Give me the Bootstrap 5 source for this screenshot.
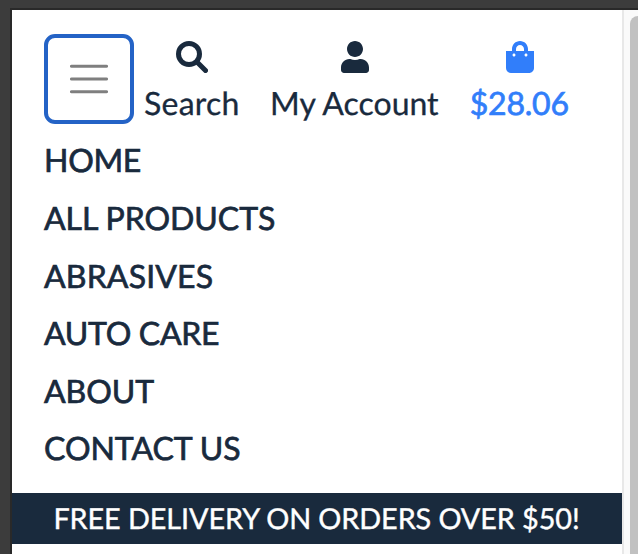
<!DOCTYPE html>
<html lang="en">
<head>
<meta charset="utf-8">
<meta name="viewport" content="width=device-width, initial-scale=1">
<title>Store menu</title>
<link href="https://cdn.jsdelivr.net/npm/bootstrap@5.3.0/dist/css/bootstrap.min.css" rel="stylesheet">
<style>
html, body { height: 100%; overflow: hidden; }
body { font-family: Lato, sans-serif; font-size: 32px; line-height: 48px; color: #192a3d; background: #3c3c3c; padding: 8px 0 0 10px; text-rendering: geometricPrecision; }
.device { border-left: 2px solid #292929; border-top: 2px solid #292929; height: 546px; }
.site-bar { padding: 24px 32px 0; height: 120px; }
.site-bar .navbar-toggler { width: 90px; height: 90px; border: 4px solid #2463c6; border-radius: 11px; }
.tool { color: #192a3d; padding-top: 7px; -webkit-text-stroke: .3px; }
.tool svg { height: 32px; display: block; margin-bottom: 6px; flex-shrink: 0; }
.tool-search { margin-left: 10px; letter-spacing: .25px; }
.tool-account { margin-left: 30.4px; }
.tool-account svg { margin-left: 1px; }
.tool-cart { margin-left: 31.1px; color: #317efa; -webkit-text-stroke: .7px; letter-spacing: -.2px; }
.tool-cart svg { margin-left: 1px; }
.menu { padding: 0 32px; height: 363px; }
.menu .nav-link { color: #192a3d; height: 57.6px; padding: 6.4px 0 0; line-height: 48px; -webkit-text-stroke: .7px; letter-spacing: -.05px; }
.menu .item-home { letter-spacing: -.3px; }
.menu .item-abrasives { letter-spacing: .15px; }
.menu .item-auto { letter-spacing: -.3px; }
.promo { background: #192a3d; height: 51px; font-size: 28.8px; line-height: 52px; letter-spacing: -.08px; -webkit-text-stroke: .4px; padding-right: 1px; }
.track { width: 16px; background: #fafafa; border-left: 2px solid #e8e8e8; padding: 6px 0 0 6px; }
.thumb { background: #c1c1c1; border-top-left-radius: 8px; }
</style>
</head>
<body>
<div class="device d-flex">
  <main class="flex-grow-1 bg-white overflow-hidden">
    <header class="site-bar d-flex align-items-start">
      <button class="navbar-toggler bg-white p-0 d-flex align-items-center justify-content-center flex-shrink-0" type="button" aria-label="Menu">
        <svg width="38" height="30" viewBox="0 0 38 30" stroke="#7f7f7f" stroke-width="3.1" stroke-linecap="round"><path d="M1.500 2.200h35M1.500 15h35M1.500 27.800h35"/></svg>
      </button>
      <a class="tool tool-search d-flex flex-column align-items-center text-decoration-none text-nowrap" href="#">
        <svg width="32" viewBox="0 0 512 512" fill="none" stroke="currentColor" stroke-width="80" stroke-linecap="round"><circle cx="208" cy="208" r="168"/><path d="M340 340L472 472"/></svg>
        <span>Search</span>
      </a>
      <a class="tool tool-account d-flex flex-column align-items-center text-decoration-none text-nowrap" href="#">
        <svg width="28" viewBox="0 0 448 512" fill="currentColor"><path d="M224 256c70.700 0 128-57.300 128-128S294.700 0 224 0 96 57.300 96 128s57.300 128 128 128zm89.600 32h-16.700c-22.200 10.200-46.900 16-72.900 16s-50.600-5.800-72.900-16h-16.700C60.200 288 0 348.200 0 422.400V464c0 26.500 21.500 48 48 48h352c26.500 0 48-21.500 48-48v-41.600c0-74.200-60.200-134.400-134.400-134.400z"/></svg>
        <span>My Account</span>
      </a>
      <a class="tool tool-cart d-flex flex-column align-items-center text-decoration-none text-nowrap" href="#">
        <svg width="28" viewBox="0 0 448 512" fill="currentColor"><path d="M352 160v-32C352 57.420 294.579 0 224 0 153.420 0 96 57.420 96 128v32H0v272c0 44.183 35.817 80 80 80h288c44.183 0 80-35.817 80-80V160h-96zm-192-32c0-35.290 28.710-64 64-64s64 28.710 64 64v32H160v-32zm160 120c-13.255 0-24-10.745-24-24s10.745-24 24-24 24 10.745 24 24-10.745 24-24 24zm-192 0c-13.255 0-24-10.745-24-24s10.745-24 24-24 24 10.745 24 24-10.745 24-24 24z"/></svg>
        <span>$28.06</span>
      </a>
    </header>
    <nav class="menu nav flex-column flex-nowrap">
      <a class="nav-link item-home" href="#">HOME</a>
      <a class="nav-link" href="#">ALL PRODUCTS</a>
      <a class="nav-link item-abrasives" href="#">ABRASIVES</a>
      <a class="nav-link item-auto" href="#">AUTO CARE</a>
      <a class="nav-link" href="#">ABOUT</a>
      <a class="nav-link" href="#">CONTACT US</a>
    </nav>
    <div class="promo text-white text-center text-nowrap">FREE DELIVERY ON ORDERS OVER $50!</div>
  </main>
  <div class="track flex-shrink-0"><div class="thumb h-100"></div></div>
</div>
<script src="https://cdn.jsdelivr.net/npm/bootstrap@5.3.0/dist/js/bootstrap.bundle.min.js"></script>
</body>
</html>
